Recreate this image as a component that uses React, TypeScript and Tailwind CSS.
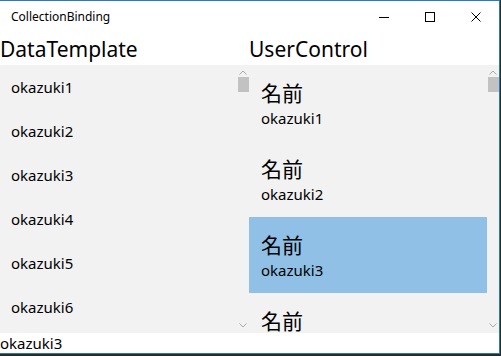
import React from "react";

const leftItems = ["okazuki1", "okazuki2", "okazuki3", "okazuki4", "okazuki5", "okazuki6"];
const rightItems = ["okazuki1", "okazuki2", "okazuki3", "okazuki4"];
const selected = "okazuki3";

const font = { fontFamily: '"Noto Sans", "Noto Sans CJK JP", sans-serif' };

const Chevron = ({ up }: { up?: boolean }) => (
  <svg width="8" height="5" viewBox="0 0 8 5" className="block">
    <polyline
      points={up ? "0.5,4.5 4,1 7.5,4.5" : "0.5,0.5 4,4 7.5,0.5"}
      fill="none"
      stroke="#a8a8a8"
      strokeWidth="1"
    />
  </svg>
);

// barra de desplazamiento estilo UWP
const ScrollBar = () => (
  <div className="flex w-[12px] flex-col items-center">
    <div className="mt-[4px] flex h-[6px] items-center">
      <Chevron up />
    </div>
    <div className="mt-[2px] h-[15px] w-[11px] bg-[#c2c2c2]" />
    <div className="flex-1" />
    <div className="mb-[5px] flex h-[6px] items-center">
      <Chevron />
    </div>
  </div>
);

export default function App() {
  return (
    <div className="h-[356px] w-[501px] overflow-hidden bg-[#2b2b2b] text-black" style={font}>
      <div className="flex h-[354px] w-[500px] flex-col border-t border-r border-b border-[#2a78cc] bg-white">
        {/* barra de título */}
        <div className="flex h-[32px] items-center">
          <div className="flex-1 pl-[11px] text-[12px] leading-[32px]">CollectionBinding</div>
          <div className="flex h-[32px] w-[46px] items-center justify-center">
            <div className="h-px w-[10px] bg-black" />
          </div>
          <div className="flex h-[32px] w-[46px] items-center justify-center">
            <div className="h-[10px] w-[10px] border border-black" />
          </div>
          <div className="flex h-[32px] w-[46px] items-center justify-center">
            <svg width="10" height="10" viewBox="0 0 10 10">
              <path d="M0.5 0.5 L9.5 9.5 M9.5 0.5 L0.5 9.5" stroke="black" strokeWidth="1" />
            </svg>
          </div>
        </div>

        {/* encabezados */}
        <div className="grid h-[32px] grid-cols-[249px_250px] text-[21px] leading-[32px]">
          <div>DataTemplate</div>
          <div>UserControl</div>
        </div>

        {/* listas */}
        <div className="grid h-[268px] grid-cols-[249px_250px] bg-[#f2f2f2]">
          <div className="flex overflow-hidden">
            <div className="flex-1">
              {leftItems.map((item) => (
                <div key={item} className="flex h-[44px] items-center pl-[11px] text-[15px] leading-[20px]">
                  {item}
                </div>
              ))}
            </div>
            <ScrollBar />
          </div>
          <div className="flex overflow-hidden">
            <div className="flex-1">
              {rightItems.map((item) => (
                <div
                  key={item}
                  className={`h-[76px] shrink-0 pl-[12px] pt-[15px] ${item === selected ? "bg-[#90c0e6]" : ""}`}
                >
                  <div className="text-[21px] leading-[26px]">名前</div>
                  <div className="mt-[2px] text-[15px] leading-[20px]">{item}</div>
                </div>
              ))}
            </div>
            <ScrollBar />
          </div>
        </div>

        {/* texto seleccionado */}
        <div className="h-[20px] text-[15px] leading-[20px]">{selected}</div>
      </div>
    </div>
  );
}
